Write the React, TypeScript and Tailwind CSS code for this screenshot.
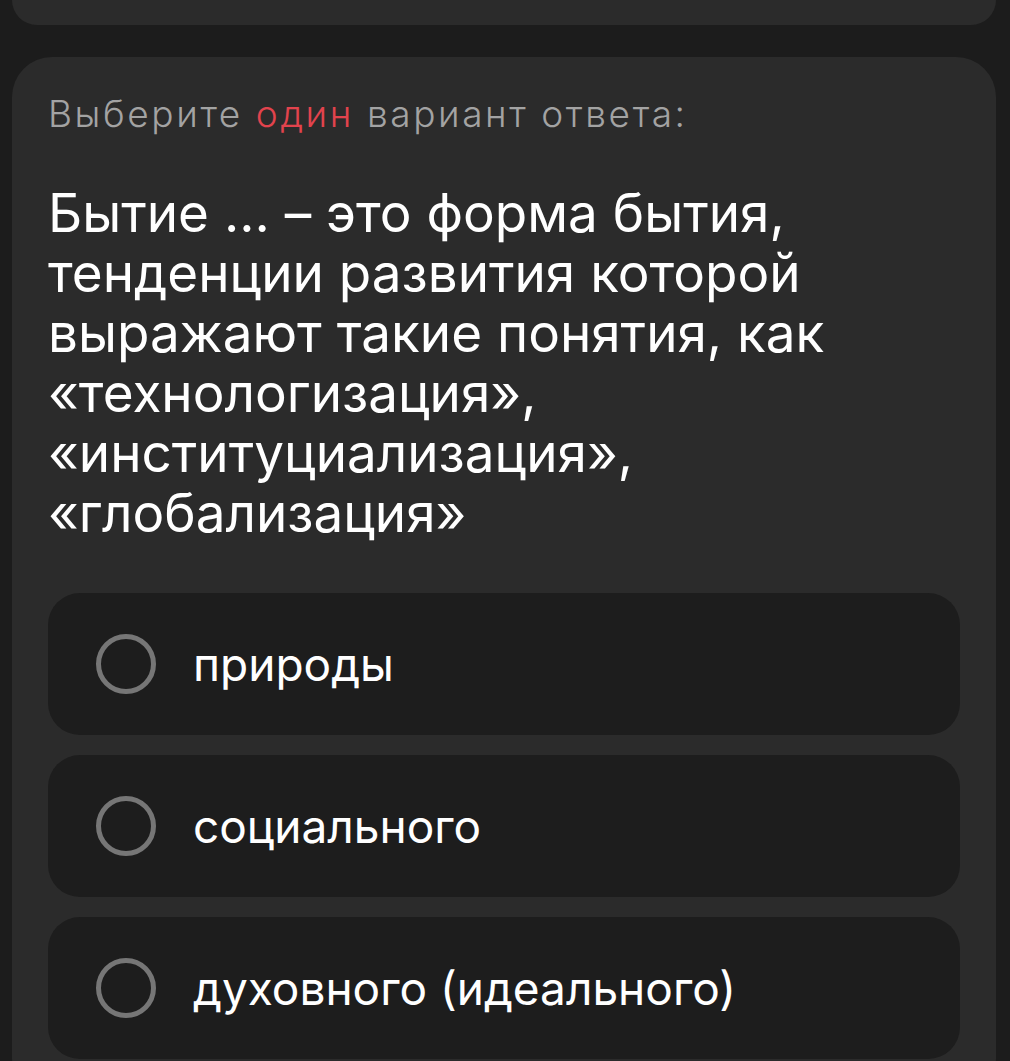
const options = ["природы", "социального", "духовного (идеального)"];

function Radio() {
    return <span className="block w-[60px] h-[60px] shrink-0 rounded-full border-[5px] border-[#767676]" />;
}

export default function App() {
    return (
        <div className="min-h-[1061px] bg-[#1c1c1c] pl-3 pr-3.5 font-['Inter',sans-serif] overflow-hidden">
            <div className="h-[25px] rounded-b-[40px] bg-[#2b2b2b]" />
            <div className="mt-8 rounded-[40px] bg-[#2b2b2b] px-9 pt-[35px] pb-10">
                <p className="text-[37px] leading-[44px] font-light tracking-[0.07em] text-[#a3a3a3]">
                    Выберите <span className="text-[#e2434d]">один</span> вариант ответа:
                </p>
                <h1 className="mt-[47px] text-[53px] leading-[60px] font-normal text-white">
                    Бытие … – это форма бытия, тенденции развития которой выражают такие понятия, как «технологизация», «институциализация», «глобализация»
                </h1>
                <div className="mt-[50px] flex flex-col gap-5">
                    {options.map((o) => (
                        <div key={o} className="h-[142px] rounded-[32px] bg-[#1d1d1d] flex items-center pl-12 gap-[37px]">
                            <Radio />
                            <span className="text-[46px] leading-none text-white">{o}</span>
                        </div>
                    ))}
                </div>
            </div>
        </div>
    );
}
